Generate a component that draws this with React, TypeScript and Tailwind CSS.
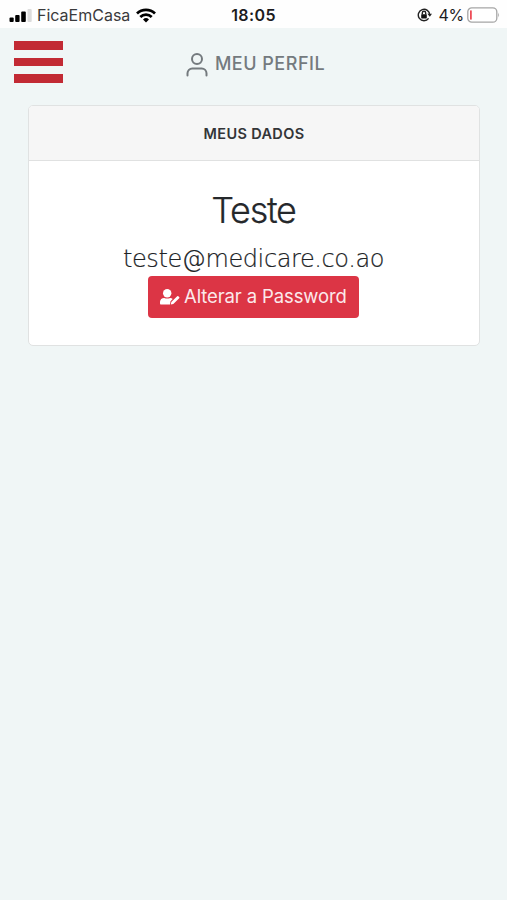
import React from "react";

function StatusBar() {
  return (
    <div className="grid h-7 grid-cols-3 items-center bg-[#fefefe] pl-[9px] pr-[7px] text-[#1c1c1e]">
      <div className="flex items-center whitespace-nowrap pt-[2px]">
        <svg width="23" height="13" viewBox="0 0 23 13">
          <rect x="0.5" y="8.5" width="4.2" height="4.5" rx="1" fill="#000" />
          <rect x="6.2" y="6" width="4.4" height="7" rx="1" fill="#000" />
          <rect x="12.2" y="2.5" width="4.6" height="10.5" rx="1" fill="#000" />
          <rect x="18.5" y="0" width="4.2" height="13" rx="1" fill="#dcdcdc" />
        </svg>
        <span className="ml-[5px] text-[16px] leading-5 text-[#3a3a3c]">FicaEmCasa</span>
        <svg className="ml-[6px]" width="20" height="15" viewBox="0 0 20 15" fill="none" stroke="#000" strokeWidth="2.7">
          <path d="M1 5.5a12.8 12.8 0 0 1 18 0" />
          <path d="M4.3 9a8.1 8.1 0 0 1 11.4 0" />
          <path d="M10 14.5l-3-3a4.3 4.3 0 0 1 6 0z" fill="#000" stroke="none" />
        </svg>
      </div>
      <span className="pr-[2px] pt-[2px] text-center text-[16px] font-semibold leading-5 tracking-[0.4px]">18:05</span>
      <div className="flex items-center justify-end pt-[2px]">
        <svg width="15" height="14" viewBox="0 0 15 14" fill="none" stroke="#222" strokeWidth="1.4">
          <path d="M11.6 10.4A5.7 5.7 0 1 1 12.7 7" />
          <path d="M10.4 5.8h4.6l-2.2 3z" fill="#222" stroke="none" />
          <rect x="4.2" y="6.2" width="5.6" height="4.2" rx=".6" fill="#111" stroke="none" />
          <path d="M5.3 6.5V5a1.7 1.7 0 0 1 3.4 0v1.5" />
        </svg>
        <span className="ml-[7px] text-[16px] leading-5 tracking-[-0.3px]">4%</span>
        <svg className="ml-[3px]" width="33" height="16" viewBox="0 0 33 16">
          <rect x=".8" y=".8" width="29" height="14.4" rx="4" fill="#fff" stroke="#a5a5a5" strokeWidth="1.3" />
          <rect x="3" y="3.2" width="1.8" height="9.6" rx=".8" fill="#ee4c57" />
          <path d="M31.2 5.5q1.8 2.5 0 5z" fill="#a5a5a5" />
        </svg>
      </div>
    </div>
  );
}

function UserEditIcon() {
  return (
    <svg width="20" height="16" viewBox="0 0 20 16" fill="#fff">
      <circle cx="7.2" cy="4.3" r="4.2" />
      <path d="M0 14v-1.2A4.2 4.2 0 0 1 4.2 9q3 1 6 0 1.5.2 2.5 1L10.5 12.2 10 15.6H1.5A1.5 1.5 0 0 1 0 14z" />
      <path d="M11.3 13.1 17.2 7.2q.6-.5 1.1 0l.9.9q.5.5 0 1.1L13.3 15l-2.5.4z" />
    </svg>
  );
}

export default function App() {
  return (
    <div className="min-h-screen bg-[#f0f6f6] font-['Inter','Liberation_Sans',sans-serif]">
      <StatusBar />
      <header className="grid h-[77px] grid-cols-[63px_1fr_63px] items-start">
        <button aria-label="Menu" className="ml-[14px] mt-[13px] flex w-[49px] flex-col gap-2">
          <span className="h-[8.5px] w-full bg-[#c22a34]" />
          <span className="h-[8.5px] w-full bg-[#c22a34]" />
          <span className="h-[8.5px] w-full bg-[#c22a34]" />
        </button>
        <h1 className="mt-[22px] flex items-center justify-center whitespace-nowrap pl-[4px] text-[18px] font-medium leading-7 tracking-[0.5px] text-[#747a7e]">
          <svg className="mt-[2px]" width="22" height="24" viewBox="0 0 22 24" fill="none" stroke="currentColor" strokeWidth="2" strokeLinecap="round">
            <circle cx="11" cy="6" r="5" />
            <path d="M1.5 22.5v-2.2a4.8 4.8 0 0 1 4.8-4.8h9.4a4.8 4.8 0 0 1 4.8 4.8v2.2" />
          </svg>
          <span className="ml-[7px]">MEU PERFIL</span>
        </h1>
      </header>
      <main className="ml-7 mr-[27px] h-[241px] overflow-hidden rounded-[5px] border-[1.5px] border-[#e0e2e2] bg-white text-center">
        <h2 className="h-[55px] border-b-[1.5px] border-[#e0e1e1] bg-[#f6f6f6] pt-[18px] text-[14.5px] font-semibold leading-5 tracking-[0.35px] text-[#333538]">
          MEUS DADOS
        </h2>
        <div className="flex flex-col items-center pr-[1px] pt-[27px]">
          <p className="text-[36px] font-light leading-[44px] tracking-[-1.3px] text-[#25282b] [-webkit-text-stroke:0.2px_#25282b]">Teste</p>
          <p className="mt-[13px] font-['DejaVu_Sans_Light','DejaVu_Sans',sans-serif] text-[24px] font-extralight leading-7 tracking-[-0.4px] text-[#202326] [-webkit-text-stroke:0.2px_#202326]">
            teste@medicare.co.ao
          </p>
          <button className="mt-[3px] flex h-[42px] w-[211px] items-center rounded-[4px] bg-[#dc3545] pl-[12px] text-[18.5px] text-[#fbe9eb]">
            <UserEditIcon />
            <span className="ml-[4px] whitespace-nowrap tracking-[-0.12px]">Alterar a Password</span>
          </button>
        </div>
      </main>
    </div>
  );
}
